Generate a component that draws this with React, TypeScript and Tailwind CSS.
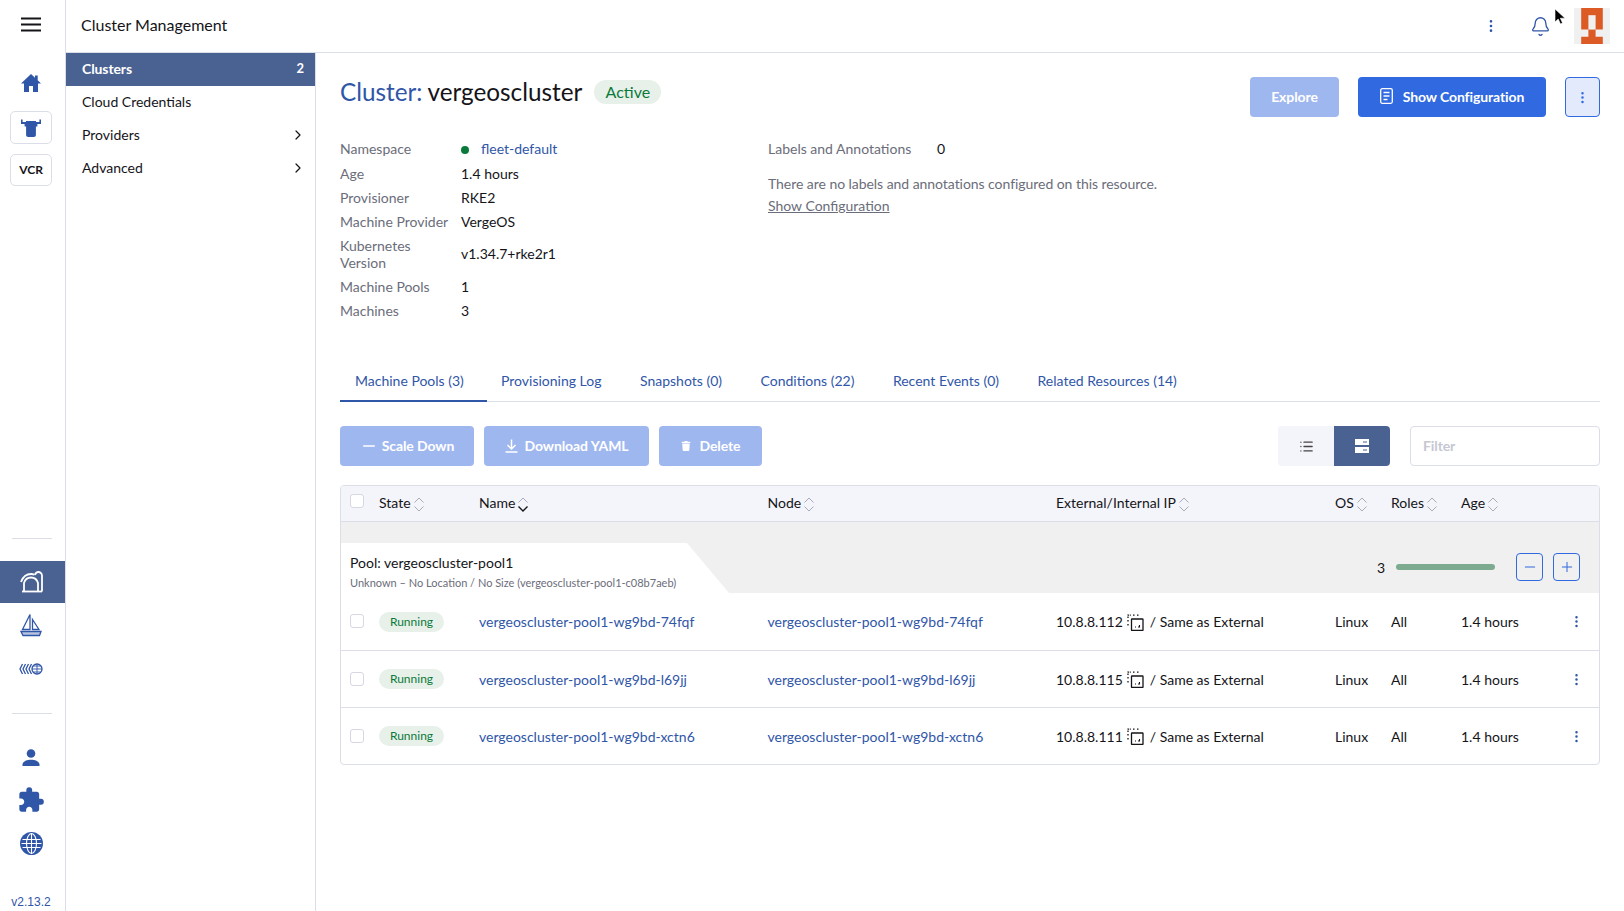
import { Bell, ChevronRight, EllipsisVertical, List, Minus, Plus } from 'lucide-react'
import { FaTrash } from 'react-icons/fa'
import { MdExtension } from 'react-icons/md'

const TABS = ['Provisioning Log', 'Snapshots (0)', 'Conditions (22)', 'Recent Events (0)', 'Related Resources (14)']

const INFO = [
  ['Age', '1.4 hours'],
  ['Provisioner', 'RKE2'],
  ['Machine Provider', 'VergeOS'],
]

const ROWS = [
  { name: 'vergeoscluster-pool1-wg9bd-74fqf', ip: '10.8.8.112' },
  { name: 'vergeoscluster-pool1-wg9bd-l69jj', ip: '10.8.8.115' },
  { name: 'vergeoscluster-pool1-wg9bd-xctn6', ip: '10.8.8.111' },
]

function SortIcon({ active = false }: { active?: boolean }) {
  return (
    <svg width="12" height="15" viewBox="0 0 12 15" fill="none" className="ml-[2px] mt-[3px]">
      <path d="M1.500 5.500 6 1l4.500 4.500" stroke="#a9abb8" strokeWidth="1" />
      <path d="M1.500 9.500 6 14l4.500-4.500" stroke={active ? '#141419' : '#a9abb8'} strokeWidth={active ? 1.4 : 1} />
    </svg>
  )
}

function Checkbox() {
  return <div className="w-[14px] h-[14px] rounded-[3px] border border-[#d5d7e3] bg-white" />
}

function Header({ label, active }: { label: string; active?: boolean }) {
  return (
    <div className="-mt-[2px] flex items-center text-[#141419]">
      {label}
      <SortIcon active={active} />
    </div>
  )
}

function HomeIcon() {
  return (
    <svg width="20" height="18" viewBox="0 0 20 18" fill="#3056a8">
      <path d="M10 0 0 9.500h3V18h5v-6h4v6h5V9.500h3l-3.300-3.200V1.500h-2.700v2.200z" />
    </svg>
  )
}

function BullIcon() {
  return (
    <svg width="22" height="20" viewBox="0 0 22 20" fill="#3056a8">
      <path d="M1 1.500h1.600v2.600H6V3h10v1.100h3.400V1.500H21v4.400h-3.600v2.600H15.900V17c0 1.200-1 2-2 2H8.100c-1 0-2-.8-2-2V8.500H4.600V5.900H1z" />
    </svg>
  )
}

function ClusterIcon() {
  return (
    <svg width="24" height="22" viewBox="0 0 24 22" fill="none" stroke="#fff" strokeWidth="1.800">
      <path d="M1 11C3 5.500 7 3 11 3c1.500 0 2.500.3 3.500.8" />
      <path d="M4 20V12c1-3.500 4-5.500 7-5.500s6 2 7 5.500v8" />
      <path d="M2 20.500h20" />
      <path d="M15 4c.5-2 2-3 3.500-3S22 2.500 22 4.500V20.500" />
    </svg>
  )
}

function SailIcon() {
  return (
    <svg width="22" height="24" viewBox="0 0 22 24" fill="none" stroke="#3056a8" strokeWidth="1.300">
      <path d="M10 1.500 2.500 16.500H10z" />
      <path d="M12.500 6.500 19 16.500h-6.500z" />
      <path d="M1 18.500h20l-1.500 4H3z" fill="#3056a8" fillOpacity="0.35" />
    </svg>
  )
}

function FleetIcon() {
  return (
    <svg width="24" height="12" viewBox="0 0 24 12" fill="none" stroke="#3056a8" strokeWidth="1.300">
      <path d="M3.500 1 1 6l2.500 5" />
      <path d="M6.500 1 4 6l2.500 5" />
      <path d="M9.500 1 7 6l2.500 5" />
      <path d="M12.500 1 10 6l2.500 5" />
      <circle cx="18" cy="6" r="5" />
      <path d="M13 6h10M18 1v10M14.500 3h7M14.500 9h7" strokeWidth="0.900" />
    </svg>
  )
}

function UserIcon() {
  return (
    <svg width="18" height="17" viewBox="0 0 18 17" fill="#3056a8">
      <circle cx="9" cy="4.500" r="4.300" />
      <path d="M0.500 17v-1.500C0.500 12.500 5 10.800 9 10.800s8.500 1.700 8.500 4.700V17z" />
    </svg>
  )
}

function GlobeIcon() {
  return (
    <svg width="23" height="23" viewBox="0 0 23 23">
      <circle cx="11.500" cy="11.500" r="11.500" fill="#3056a8" />
      <g fill="none" stroke="#fff" strokeWidth="1.100">
        <ellipse cx="11.500" cy="11.500" rx="5" ry="10" />
        <path d="M11.500 1v21M2.500 7.500h18M1.500 11.500h20M2.500 15.500h18" />
      </g>
    </svg>
  )
}

function CopyIcon() {
  return (
    <svg width="17" height="17" viewBox="0 0 17 17" fill="none" stroke="#141419" strokeWidth="1.300" className="ml-[4px] mt-[1px]">
      <path d="M1 4V1.200h3M6 1.200h2M10 1.200h2.500M1 6v2M1 10v2" strokeDasharray="1.500 1" />
      <rect x="4.500" y="5" width="11.500" height="11.500" rx="0.500" />
      <path d="M8 13h1M11 13h1.500v-2" strokeWidth="1.100" />
    </svg>
  )
}

function DocIcon() {
  return (
    <svg width="13" height="16" viewBox="0 0 13 16" fill="none" stroke="#fff" strokeWidth="1.300" className="mr-[10px]">
      <rect x="0.700" y="0.700" width="11.600" height="14.600" rx="1.500" />
      <path d="M3.500 4.500h6M3.500 8h6M3.500 11.500h4" />
    </svg>
  )
}

function DownloadIcon() {
  return (
    <svg width="13" height="14" viewBox="0 0 13 14" fill="none" stroke="#fff" strokeWidth="1.500" className="mr-[7px]">
      <path d="M6.500 0.500v9M2.500 6l4 4 4-4" />
      <path d="M0.500 13h12" />
    </svg>
  )
}

function Avatar() {
  return (
    <svg width="36" height="36" viewBox="0 0 36 36" className="mr-[14px]">
      <rect width="36" height="36" fill="#f0f0f0" />
      <path d="M7.200 0h21.600v21.600h-7.200v7.200h7.200V36H7.200v-7.200h7.200v-7.200H7.200z" fill="#dc5a24" />
      <rect x="14.400" y="7.200" width="7.200" height="14.400" fill="#f0f0f0" />
    </svg>
  )
}

export default function App() {
  return (
    <div className="relative flex h-screen w-full overflow-hidden bg-white text-[14px] text-[#141419] font-[family-name:Lato,sans-serif]">
      <aside className="flex w-[66px] shrink-0 flex-col border-r border-[#dcdee7]">
        <div className="flex h-[50px] items-center justify-center pr-[3px]">
          <svg width="20" height="15" viewBox="0 0 20 15" stroke="#141419" strokeWidth="2">
            <path d="M0 1.500h20M0 7.500h20M0 13.500h20" />
          </svg>
        </div>
        <div className="mt-[25px] flex justify-center pr-[3px]">
          <HomeIcon />
        </div>
        <div className="ml-[10px] mr-[13px] mt-[19px] flex h-[33px] items-center justify-center rounded-[5px] border border-[#dcdee7]">
          <BullIcon />
        </div>
        <div className="ml-[10px] mr-[13px] mt-[10px] flex h-[32px] items-center justify-center rounded-[5px] border border-[#dcdee7] text-[12px] font-bold">
          VCR
        </div>
        <div className="ml-[12px] mr-[13px] mt-[352px] border-t border-[#dcdee7]" />
        <div className="mt-[22px] flex h-[43px] w-[65px] items-center justify-center bg-[#4a6291] pr-[2px]">
          <ClusterIcon />
        </div>
        <div className="mt-[10px] flex justify-center pr-[3px]">
          <SailIcon />
        </div>
        <div className="mt-[26px] flex justify-center pr-[3px]">
          <FleetIcon />
        </div>
        <div className="ml-[12px] mr-[13px] mt-[38px] border-t border-[#dcdee7]" />
        <div className="mt-[35px] flex justify-center pr-[3px]">
          <UserIcon />
        </div>
        <div className="mt-[20px] flex justify-center pr-[3px]">
          <MdExtension size={28} color="#3056a8" />
        </div>
        <div className="mt-[18px] flex justify-center pr-[3px]">
          <GlobeIcon />
        </div>
        <div className="mt-[38px] pr-[3px] text-center text-[12px] text-[#3056a8] font-[family-name:'Liberation_Sans',sans-serif]">
          v2.13.2
        </div>
      </aside>

      <div className="flex min-w-0 flex-1 flex-col">
        <header className="flex h-[53px] shrink-0 items-center border-b border-[#dcdee7] pb-[2px] pl-[15px]">
          <div className="text-[16px]">Cluster Management</div>
          <div className="ml-auto flex items-center pt-[2px]">
            <EllipsisVertical size={16} color="#3056a8" />
            <Bell size={21} strokeWidth={1.5} color="#3056a8" className="ml-[31px]" />
            <div className="w-[23px]" />
            <Avatar />
          </div>
        </header>

        <div className="flex min-h-0 flex-1">
          <nav className="w-[250px] shrink-0 border-r border-[#dcdee7]">
            <div className="flex h-[33px] items-center justify-between bg-[#4a6291] pb-[2px] pl-[16px] pr-[11px] font-bold tracking-[-0.1px] text-white">
              Clusters
              <span className="text-[13px]">2</span>
            </div>
            <div className="flex h-[33px] items-center pb-[2px] pl-[16px]">Cloud Credentials</div>
            <div className="flex h-[33px] items-center justify-between pb-[2px] pl-[16px] pr-[9px]">
              Providers
              <ChevronRight size={16} strokeWidth={1.8} />
            </div>
            <div className="flex h-[33px] items-center justify-between pb-[2px] pl-[16px] pr-[9px]">
              Advanced
              <ChevronRight size={16} strokeWidth={1.8} />
            </div>
          </nav>

          <main className="min-w-0 flex-1 pl-[24px] pr-[24px] pt-[24px]">
            <div className="flex h-[40px] items-start">
              <h1 className="flex h-[30px] items-center text-[24.3px] leading-[30px]">
                <span className="text-[#3056a8]">Cluster:</span>
                <span className="ml-[5px]">vergeoscluster</span>
              </h1>
              <span className="ml-[12px] mt-[3px] flex h-[24px] w-[67px] items-center justify-center rounded-full bg-[#e8f0ea] text-[16px] text-[#0a7a3a]">
                Active
              </span>
              <div className="ml-auto flex tracking-[-0.1px]">
                <button className="h-[40px] w-[89px] rounded-[4px] bg-[#9fb7ef] pb-[1px] font-bold text-white">Explore</button>
                <button className="ml-[19px] flex h-[40px] w-[188px] items-center justify-center rounded-[4px] bg-[#3069e0] pb-[2px] font-bold text-white">
                  <DocIcon />
                  Show Configuration
                </button>
                <button className="ml-[19px] flex h-[40px] w-[35px] items-center justify-center rounded-[4px] border border-[#3069e0] bg-[#e3eafb]">
                  <EllipsisVertical size={15} color="#3069e0" />
                </button>
              </div>
            </div>

            <div className="mt-[20px] flex h-[186px]">
              <div className="w-[428px] shrink-0">
                <div className="flex h-[24px] items-center pb-[2px]">
                  <div className="w-[121px] text-[#6b6d7a]">Namespace</div>
                  <span className="mt-[4px] h-[8px] w-[8px] rounded-full bg-[#0a7a3a]" />
                  <span className="ml-[12px] text-[#3056a8]">fleet-default</span>
                </div>
                {INFO.map(([label, value]) => (
                  <div key={label} className="flex h-[24px] items-center">
                    <div className="w-[121px] text-[#6b6d7a]">{label}</div>
                    <div>{value}</div>
                  </div>
                ))}
                <div className="flex h-[41px] items-center">
                  <div className="w-[121px] pr-[30px] leading-[17px] text-[#6b6d7a]">Kubernetes Version</div>
                  <div>v1.34.7+rke2r1</div>
                </div>
                <div className="flex h-[24px] items-center">
                  <div className="w-[121px] text-[#6b6d7a]">Machine Pools</div>
                  <div>1</div>
                </div>
                <div className="flex h-[24px] items-center">
                  <div className="w-[121px] text-[#6b6d7a]">Machines</div>
                  <div>3</div>
                </div>
              </div>
              <div>
                <div className="flex h-[24px] items-center pb-[2px]">
                  <span className="w-[169px] text-[#6b6d7a]">Labels and Annotations</span>
                  <span>0</span>
                </div>
                <div className="mt-[12px] leading-[22px] text-[#6b6d7a]">
                  <span className="tracking-[-0.05px]">There are no labels and annotations configured on this resource.</span>
                  <div className="underline">Show Configuration</div>
                </div>
              </div>
            </div>

            <div className="mt-[37px] flex h-[42px] border-b border-[#dcdee7] pb-[1px] text-[#3056a8]">
              <div className="-mb-[2px] flex h-[42px] w-[147px] items-center border-b-2 border-[#3056a8] pl-[15px]">
                Machine Pools (3)
              </div>
              {TABS.map((tab, i) => (
                <div key={tab} className={`${i === 0 ? 'ml-[14px]' : 'ml-[38.5px]'} flex h-[40px] items-center`}>
                  {tab}
                </div>
              ))}
            </div>

            <div className="mt-[24px] flex h-[40px] items-center font-bold tracking-[-0.1px] text-white">
              <button className="flex h-[40px] w-[134px] items-center justify-center rounded-[4px] bg-[#9fb7ef] pb-[1px]">
                <Minus size={18} strokeWidth={2} className="mr-[4px]" />
                Scale Down
              </button>
              <button className="ml-[10px] flex h-[40px] w-[165px] items-center justify-center rounded-[4px] bg-[#9fb7ef] pb-[1px]">
                <DownloadIcon />
                Download YAML
              </button>
              <button className="ml-[10px] flex h-[40px] w-[103px] items-center justify-center rounded-[4px] bg-[#9fb7ef] pb-[1px]">
                <FaTrash size={10} className="mr-[9px]" />
                Delete
              </button>
              <div className="ml-auto flex overflow-hidden rounded-[4px]">
                <div className="flex h-[40px] w-[56px] items-center justify-center bg-[#f4f5fa]">
                  <List size={15} strokeWidth={2.2} color="#444" />
                </div>
                <div className="flex h-[40px] w-[56px] items-center justify-center bg-[#4a6291]">
                  <svg width="14" height="14" viewBox="0 0 14 14" fill="#fff">
                    <path d="M0 0h14v6H0zM0 8h14v6H0z" />
                    <path d="M8 3h4M8 11h4" stroke="#4a6291" strokeWidth="1" />
                  </svg>
                </div>
              </div>
              <div className="ml-[20px] flex h-[40px] w-[190px] items-center rounded-[4px] border border-[#dcdee7] pb-[1px] pl-[12px] text-[#c5c7d2]">
                Filter
              </div>
            </div>

            <div className="mt-[19px] overflow-hidden rounded-[4px] border border-[#dcdee7]">
              <div className="grid h-[36px] grid-cols-[38px_100px_288.5px_288.5px_279px_56px_70px_1fr] items-center border-b border-[#dcdee7] bg-[#f4f5fa]">
                <div className="-mt-[6px] pl-[9px]">
                  <Checkbox />
                </div>
                <Header label="State" />
                <Header label="Name" active />
                <Header label="Node" />
                <Header label="External/Internal IP" />
                <Header label="OS" />
                <Header label="Roles" />
                <Header label="Age" />
              </div>

              <div className="flex h-[71px] bg-[#f0f0f0]">
                <div className="mt-[21px] h-[50px] w-[388px] bg-white pl-[9px] pt-[10px] [clip-path:polygon(0_0,346px_0,388px_100%,0_100%)]">
                  <div className="leading-[20px]">Pool: vergeoscluster-pool1</div>
                  <div className="text-[11px] leading-[20px] text-[#6b6d7a]">
                    Unknown – No Location / No Size (vergeoscluster-pool1-c08b7aeb)
                  </div>
                </div>
                <div className="ml-auto mt-[31px] flex h-[28px] items-center pr-[19px]">
                  <span>3</span>
                  <div className="ml-[11px] h-[6px] w-[99px] rounded-full bg-[#7dab90]" />
                  <button className="ml-[21px] flex h-[28px] w-[27px] items-center justify-center rounded-[4px] border border-[#3069e0]">
                    <Minus size={16} strokeWidth={1.5} color="#3069e0" />
                  </button>
                  <button className="ml-[10px] flex h-[28px] w-[27px] items-center justify-center rounded-[4px] border border-[#3069e0]">
                    <Plus size={16} strokeWidth={1.5} color="#3069e0" />
                  </button>
                </div>
              </div>

              {ROWS.map((row, i) => (
                <div
                  key={row.name}
                  className={`grid h-[57px] grid-cols-[38px_100px_288.5px_288.5px_279px_56px_70px_1fr] items-center ${i > 0 ? 'border-t border-[#dcdee7]' : ''}`}
                >
                  <div className="-mt-[1px] pl-[9px]">
                    <Checkbox />
                  </div>
                  <div>
                    <span className="flex h-[20px] w-[65px] items-center justify-center rounded-full bg-[#e8f0ea] text-[12px] text-[#0a7a3a]">
                      Running
                    </span>
                  </div>
                  <div className="text-[#3056a8]">{row.name}</div>
                  <div className="text-[#3056a8]">{row.name}</div>
                  <div className="flex items-center">
                    {row.ip}
                    <CopyIcon />
                    <span className="ml-[6px]">/ Same as External</span>
                  </div>
                  <div>Linux</div>
                  <div>All</div>
                  <div className="flex items-center justify-between pr-[15px]">
                    1.4 hours
                    <EllipsisVertical size={15} color="#3056a8" />
                  </div>
                </div>
              ))}
            </div>
          </main>
        </div>
      </div>

      <svg width="12" height="18" viewBox="0 0 12 18" className="absolute left-[1554px] top-[8px]">
        <path d="M1 1v13l3.200-3 2.300 5 2-1-2.200-4.800H11z" fill="#000" stroke="#fff" strokeWidth="0.600" />
      </svg>
    </div>
  )
}
